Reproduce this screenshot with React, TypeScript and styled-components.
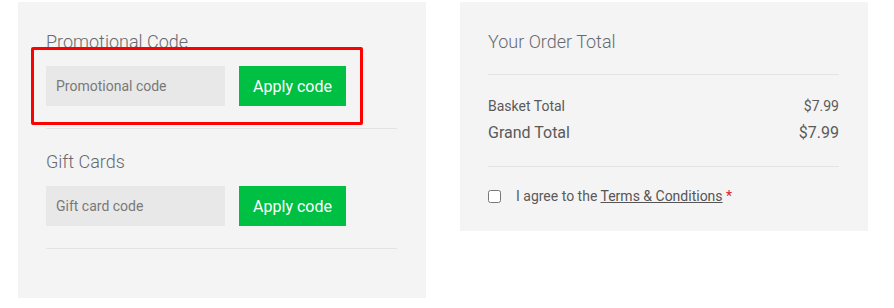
import React from "react";
import styled, { createGlobalStyle } from "styled-components";

const Global = createGlobalStyle`
  html, body { margin: 0; padding: 0; background: #ffffff; }
  body { font-family: Roboto, "Liberation Sans", Arial, sans-serif; }
  * { box-sizing: border-box; }
`;

const Page = styled.div`
  display: flex;
  align-items: flex-start;
  gap: 34px;
  padding: 2px 0 0 18px;
`;

const Panel = styled.div<{ $height: number }>`
  position: relative;
  width: 408px;
  height: ${(p) => p.$height}px;
  background: #f4f4f4;
  padding: 29px 29px 0 28px;
`;

const Section = styled.div`
  padding-bottom: 22px;
  border-bottom: 1px solid #e3e3e3;
  margin-bottom: 22px;
`;

const Heading = styled.h3<{ $gap: number }>`
  margin: 0 0 ${(p) => p.$gap}px 0;
  font-family: Roboto, "Liberation Sans", sans-serif;
  font-weight: 300;
  font-size: 18px;
  line-height: 22px;
  color: #666a70;
`;

const FormRow = styled.div`
  display: flex;
  gap: 14px;
`;

const CodeInput = styled.input`
  width: 179px;
  height: 40px;
  border: none;
  outline: none;
  background: #e8e8e8;
  padding: 0 10px;
  font-family: Roboto, "Liberation Sans", sans-serif;
  font-size: 14px;
  color: #555;
  &::placeholder { color: #787878; }
`;

const ApplyButton = styled.button`
  width: 107px;
  height: 40px;
  border: none;
  background: #00c043;
  color: #ffffff;
  font-family: Roboto, "Liberation Sans", sans-serif;
  font-size: 16px;
  font-weight: 400;
  padding: 0;
  cursor: pointer;
`;

const Highlight = styled.div`
  position: absolute;
  left: 13px;
  top: 45px;
  width: 332px;
  height: 78px;
  border: 3px solid #ff0000;
  border-radius: 2px;
  pointer-events: none;
`;

const Divider = styled.div<{ $mt: number; $mb: number }>`
  height: 1px;
  background: #e3e3e3;
  margin: ${(p) => p.$mt}px 0 ${(p) => p.$mb}px 0;
`;

const TotalRow = styled.div<{ $grand?: boolean }>`
  display: flex;
  justify-content: space-between;
  font-size: ${(p) => (p.$grand ? 16 : 14)}px;
  line-height: ${(p) => (p.$grand ? 22 : 20)}px;
  margin-top: ${(p) => (p.$grand ? 6 : 0)}px;
  color: #5a5a5a;
`;

const AgreeRow = styled.label`
  display: flex;
  align-items: center;
  gap: 15px;
  font-size: 14px;
  line-height: 20px;
  color: #5a5a5a;
`;

const Check = styled.input`
  margin: 0;
  width: 13px;
  height: 13px;
`;

const TermsLink = styled.a`
  color: #555;
  text-decoration: underline;
`;

const Required = styled.span`
  color: #e0202a;
`;

export default function App() {
  return (
    <>
      <Global />
      <Page>
        <Panel $height={296}>
          <Section>
            <Heading $gap={13}>Promotional Code</Heading>
            <FormRow>
              <CodeInput placeholder="Promotional code" />
              <ApplyButton>Apply code</ApplyButton>
            </FormRow>
          </Section>
          <Section>
            <Heading $gap={13}>Gift Cards</Heading>
            <FormRow>
              <CodeInput placeholder="Gift card code" />
              <ApplyButton>Apply code</ApplyButton>
            </FormRow>
          </Section>
          <Highlight />
        </Panel>
        <Panel $height={229}>
          <Heading $gap={0}>Your Order Total</Heading>
          <Divider $mt={21} $mb={21} />
          <TotalRow>
            <span>Basket Total</span>
            <span>$7.99</span>
          </TotalRow>
          <TotalRow $grand>
            <span>Grand Total</span>
            <span>$7.99</span>
          </TotalRow>
          <Divider $mt={22} $mb={19} />
          <AgreeRow>
            <Check type="checkbox" />
            <span>
              I agree to the <TermsLink href="#">Terms &amp; Conditions</TermsLink> <Required>*</Required>
            </span>
          </AgreeRow>
        </Panel>
      </Page>
    </>
  );
}
